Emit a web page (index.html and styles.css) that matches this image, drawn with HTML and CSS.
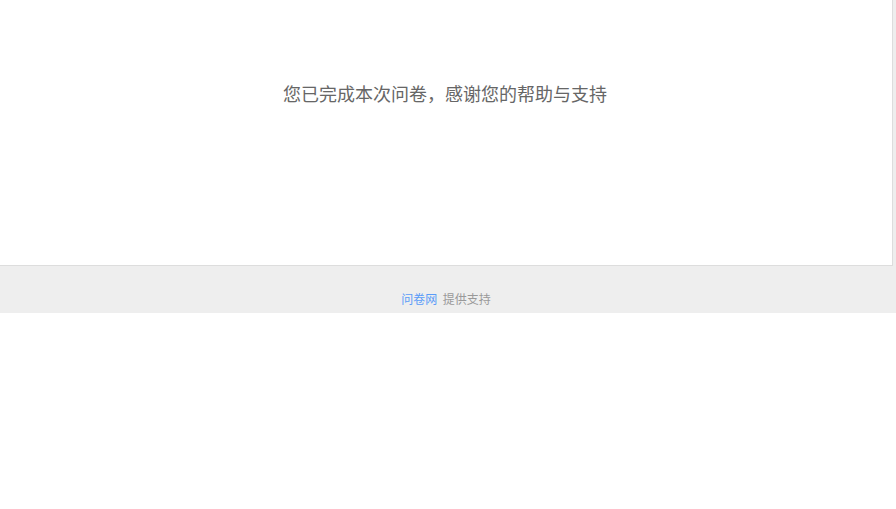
FILE: index.html
```html
<!DOCTYPE html>
<html lang="zh-CN">
<head>
    <meta charset="UTF-8">
    <meta name="viewport" content="width=device-width, initial-scale=1.0">
    <title>问卷完成</title>
    <link rel="stylesheet" href="styles.css">
</head>
<body>
    <div class="wrapper">
        <div class="card">
            <p class="thanks">您已完成本次问卷，感谢您的帮助与支持</p>
        </div>
        <div class="footer">
            <a class="brand" href="#">问卷网</a>
            <span class="support">提供支持</span>
        </div>
    </div>
</body>
</html>
```

FILE: styles.css
```css
body {
    margin: 0;
    background-color: #fff;
    font-family: "Noto Sans CJK SC", "Liberation Sans", sans-serif;
}

.wrapper {
    background-color: #eee;
}

.card {
    width: 893px;
    height: 266px;
    box-sizing: border-box;
    background-color: #fff;
    border-right: 1px solid #ddd;
    border-bottom: 1px solid #ddd;
    padding-top: 81px;
}

.thanks {
    margin: 0;
    padding-right: 2px;
    text-align: center;
    font-size: 18px;
    line-height: 24px;
    color: #666;
}

.footer {
    height: 47px;
    box-sizing: border-box;
    padding-top: 25px;
    padding-right: 4px;
    text-align: center;
    font-size: 12px;
    line-height: 16px;
}

.brand {
    color: #5a9cf8;
    text-decoration: none;
    margin-right: 3px;
}

.support {
    color: #999;
}
```
